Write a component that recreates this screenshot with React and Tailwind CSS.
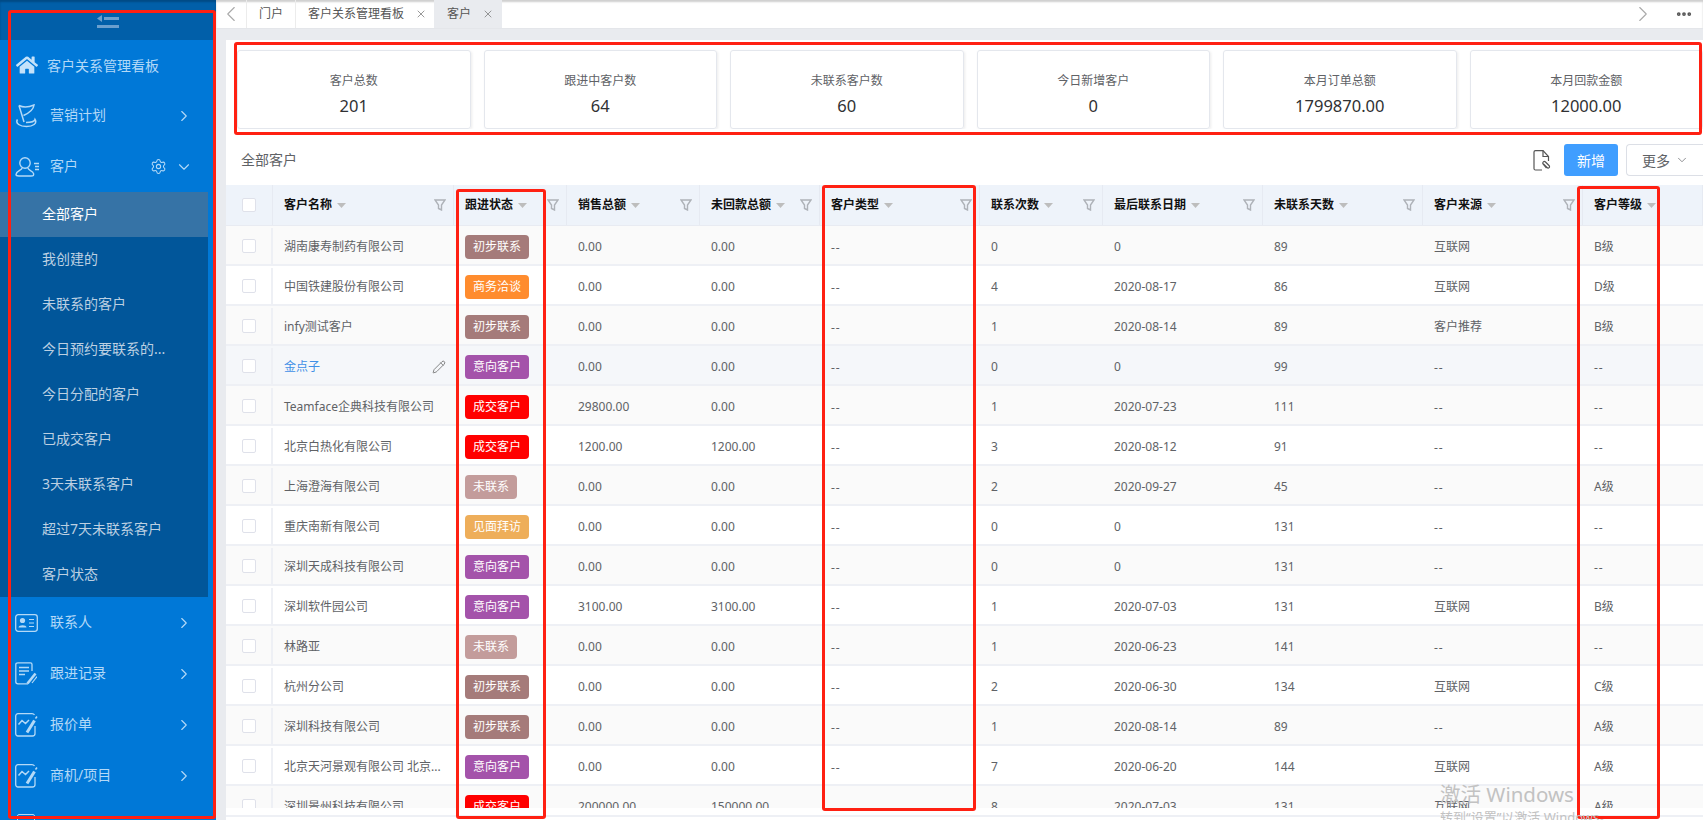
import { ChevronDown, ChevronLeft, ChevronRight, Ellipsis, Pencil, Settings, X } from "lucide-react";
import { FaHome } from "react-icons/fa";

const stats = [
  ["客户总数", "201"],
  ["跟进中客户数", "64"],
  ["未联系客户数", "60"],
  ["今日新增客户", "0"],
  ["本月订单总额", "1799870.00"],
  ["本月回款金额", "12000.00"],
];

const columns = ["客户名称", "跟进状态", "销售总额", "未回款总额", "客户类型", "联系次数", "最后联系日期", "未联系天数", "客户来源", "客户等级"];

const statusColors = {
  初步联系: "bg-[#a57b7a]",
  商务洽谈: "bg-[#ff8c2e]",
  意向客户: "bg-[#a453aa]",
  成交客户: "bg-[#ff0000]",
  未联系: "bg-[#c39c9b]",
  见面拜访: "bg-[#eeae5a]",
};

const rows = [
  ["湖南康寿制药有限公司", "初步联系", "0.00", "0.00", "0", "0", "89", "互联网", "B级"],
  ["中国铁建股份有限公司", "商务洽谈", "0.00", "0.00", "4", "2020-08-17", "86", "互联网", "D级"],
  ["infy测试客户", "初步联系", "0.00", "0.00", "1", "2020-08-14", "89", "客户推荐", "B级"],
  ["金点子", "意向客户", "0.00", "0.00", "0", "0", "99", "--", "--"],
  ["Teamface企典科技有限公司", "成交客户", "29800.00", "0.00", "1", "2020-07-23", "111", "--", "--"],
  ["北京白热化有限公司", "成交客户", "1200.00", "1200.00", "3", "2020-08-12", "91", "--", "--"],
  ["上海澄海有限公司", "未联系", "0.00", "0.00", "2", "2020-09-27", "45", "--", "A级"],
  ["重庆南新有限公司", "见面拜访", "0.00", "0.00", "0", "0", "131", "--", "--"],
  ["深圳天成科技有限公司", "意向客户", "0.00", "0.00", "0", "0", "131", "--", "--"],
  ["深圳软件园公司", "意向客户", "3100.00", "3100.00", "1", "2020-07-03", "131", "互联网", "B级"],
  ["林路亚", "未联系", "0.00", "0.00", "1", "2020-06-23", "141", "--", "--"],
  ["杭州分公司", "初步联系", "0.00", "0.00", "2", "2020-06-30", "134", "互联网", "C级"],
  ["深圳科技有限公司", "初步联系", "0.00", "0.00", "1", "2020-08-14", "89", "--", "A级"],
  ["北京天河景观有限公司 北京...", "意向客户", "0.00", "0.00", "7", "2020-06-20", "144", "互联网", "A级"],
  ["深圳景州科技有限公司", "成交客户", "200000.00", "150000.00", "8", "2020-07-03", "131", "互联网", "A级"],
];

const subMenu = ["全部客户", "我创建的", "未联系的客户", "今日预约要联系的...", "今日分配的客户", "已成交客户", "3天未联系客户", "超过7天未联系客户", "客户状态"];

const gridCols = "grid grid-cols-[47px_181px_113px_133px_120px_160px_123px_160px_160px_160px_120px]";

function FlagIcon() {
  return (
    <svg width="23" height="24" viewBox="0 0 23 24" fill="none" stroke="currentColor" strokeWidth="1.5">
      <path d="M4 1.500C8 3.500 13 3.500 19 1C18.500 6 14 9 8.500 11.500" />
      <path d="M4 1.500L9 18" />
      <path d="M2.500 15.500C0 19.500 5 22.500 11.500 22.500C18 22.500 22.500 19.500 20 15.500C19.500 17.500 15 18.500 11 18.500" />
    </svg>
  );
}

function PersonIcon() {
  return (
    <svg width="24" height="20" viewBox="0 0 24 20" fill="none" stroke="currentColor" strokeWidth="1.4">
      <circle cx="10" cy="6" r="5.200" />
      <path d="M7 11C7 13.500 1.500 13.500 1 17.500C1 19 2 19 4 19H16C18.500 19 19 18.500 18.500 16.500C18 13.500 13 13.500 13 11" />
      <path d="M19 6.500H24M20 9.500H24M20 12.500H24" />
    </svg>
  );
}

function CardIcon() {
  return (
    <svg width="23" height="18" viewBox="0 0 23 18" fill="none" stroke="currentColor" strokeWidth="1.300">
      <rect x="0.700" y="0.700" width="21.600" height="16.600" rx="2.500" />
      <circle cx="7.500" cy="6.500" r="2.600" fill="currentColor" stroke="none" />
      <path d="M3.500 13.500C3.500 10.500 11.500 10.500 11.500 13.500Z" fill="currentColor" stroke="none" />
      <path d="M14 5.500H19M14 9H19M14 12.500H19" strokeWidth="1" />
    </svg>
  );
}

function DocPenIcon() {
  return (
    <svg width="22" height="23" viewBox="0 0 22 23" fill="none" stroke="currentColor" strokeWidth="1.300">
      <path d="M13 21.800H3C1.800 21.800 0.800 21 0.800 19.800V2.500C0.800 1.500 1.800 0.800 3 0.800H15.500C16.500 0.800 17 1.500 17 2.500V9" />
      <path d="M4 5.500H14M4 9H14M4 12.500H10" strokeWidth="1.400" />
      <path d="M12.500 21.500L20.500 11.500" strokeWidth="2.600" />
      <path d="M17 21L22 14.500" strokeWidth="1.200" />
    </svg>
  );
}

function ChartPenIcon() {
  return (
    <svg width="23" height="24" viewBox="0 0 23 24" fill="none" stroke="currentColor" strokeWidth="1.300">
      <path d="M20 13V20.500C20 22 19 23 17.500 23H3C1.700 23 0.700 22 0.700 20.500V3C0.700 1.700 1.700 0.700 3 0.700H17C18 0.700 19 1.200 19.500 2" />
      <path d="M3.500 11.500L7 7.500L10.500 10.500L14 7" strokeWidth="1.500" />
      <path d="M12 19.500L19.500 7.500" strokeWidth="3" />
      <path d="M20.500 5.500L22 3.500" strokeWidth="1.500" />
    </svg>
  );
}

function MenuItem({ icon, label, open, active }) {
  return (
    <div className="flex h-[51px] shrink-0 items-center pl-[15px] text-[14px] text-[#b3d9f7]">
      <span className="flex w-[35px] shrink-0 items-center">{icon}</span>
      <span className="flex-1 pb-[2px]">{label}</span>
      {active ? <Settings size={17} strokeWidth={1.500} className="mr-[8px]" /> : null}
      {open ? (
        <ChevronDown size={18} strokeWidth={1.500} className="mr-[23px]" />
      ) : active === false ? (
        <ChevronRight size={18} strokeWidth={1.500} className="mr-[23px]" />
      ) : null}
    </div>
  );
}

function Sidebar() {
  return (
    <aside className="flex h-full w-[216px] shrink-0 flex-col overflow-hidden bg-[#0078d7]">
      <div className="flex h-[40px] shrink-0 items-center justify-center bg-[#015fa9] shadow-[inset_0_2px_2px_#014a85]">
        <svg width="22" height="14" viewBox="0 0 22 14" className="mt-[3px] text-[#6b9fce]" fill="currentColor">
          <path d="M0 3.500L5 0V7Z" />
          <rect x="7" y="2" width="15" height="3" />
          <rect x="0" y="10" width="22" height="3" />
        </svg>
      </div>
      <div className="flex h-[50px] shrink-0 items-center pl-[16px] text-[14px] text-[#b3d9f7]">
        <FaHome size={22} className="mr-[9px] text-[#c4e2fa]" />
        客户关系管理看板
      </div>
      <MenuItem icon={<FlagIcon />} label="营销计划" active={false} />
      <MenuItem icon={<PersonIcon />} label="客户" active open />
      <div className="w-[208px] shrink-0 bg-[#01569a] text-[14px] text-[#bcd0e2]">
        {subMenu.map((item, i) => (
          <div key={item} className={`flex h-[45px] items-center pb-[2px] pl-[42px] ${i === 0 ? "bg-[#3673a6] text-white" : ""}`}>
            {item}
          </div>
        ))}
      </div>
      <MenuItem icon={<CardIcon />} label="联系人" active={false} />
      <MenuItem icon={<DocPenIcon />} label="跟进记录" active={false} />
      <MenuItem icon={<ChartPenIcon />} label="报价单" active={false} />
      <MenuItem icon={<ChartPenIcon />} label="商机/项目" active={false} />
      <div className="ml-[17px] mt-[13px] h-[20px] w-[18px] shrink-0 rounded-[2px] border border-[#b3d9f7]" />
    </aside>
  );
}

function TabBar() {
  return (
    <div className="flex h-[29px] shrink-0 items-stretch border-b border-[#e4e6ea] bg-white text-[12px] text-[#555] shadow-[inset_0_2px_2px_#cfcfcf]">
      <div className="flex w-[31px] items-center justify-center border-r border-[#ececec] text-[#aaa]">
        <ChevronLeft size={26} strokeWidth={1} />
      </div>
      <div className="flex w-[49px] items-center border-r border-[#ececec] pl-[12px]">门户</div>
      <div className="flex w-[138px] items-center pl-[12px]">
        客户关系管理看板
        <X size={12} strokeWidth={1.500} className="ml-[11px] text-[#777]" />
      </div>
      <div className="flex w-[68px] items-center bg-[#e9ebef] pl-[13px]">
        客户
        <X size={12} strokeWidth={1.500} className="ml-[11px] text-[#777]" />
      </div>
      <div className="flex flex-1 items-center justify-end">
        <ChevronRight size={26} strokeWidth={1} className="mr-[19px] text-[#aaa]" />
        <Ellipsis size={18} strokeWidth={3} className="mr-[10px] text-[#555]" />
      </div>
    </div>
  );
}

function Filter() {
  return (
    <svg width="12" height="12" viewBox="0 0 12 12" fill="none" stroke="#aeb2b8" strokeWidth="1.400" className="shrink-0">
      <path d="M1 1H11L7.500 6V11L4.500 9.500V6Z" />
    </svg>
  );
}

function Checkbox() {
  return <span className="h-[14px] w-[14px] rounded-[2px] border border-[#dfe1ea] bg-white" />;
}

function TableHeader() {
  return (
    <div className={`${gridCols} h-[41px] shrink-0 border-b border-[#e8ebf2] bg-[#eef3fa] text-[12px] font-bold text-[#111]`}>
      <div className="flex items-center justify-center border-r border-[#e6eaf2]">
        <Checkbox />
      </div>
      {columns.map((name, i) => (
        <div key={name} className="flex items-center border-r border-[#e6eaf2] pl-[11px] pr-[7px]">
          {name}
          <svg width="9" height="5" viewBox="0 0 9 5" className="ml-[5px]" fill="#bdbdbd">
            <path d="M0 0H9L4.500 5Z" />
          </svg>
          <span className="flex-1" />
          {i < columns.length - 1 ? <Filter /> : null}
        </div>
      ))}
    </div>
  );
}

function Value({ text }) {
  if (text === "--") return <span className="mt-[2px] tracking-[1px]">--</span>;
  return text;
}

function Row({ row, index }) {
  const [name, status, sales, unpaid, times, last, days, source, level] = row;
  const hover = index === 3;
  const bg = hover ? "bg-[#f5f7fa]" : index % 2 === 0 ? "bg-[#fafafa]" : "bg-white";
  const cell = "flex items-center pl-[11px] pt-[3px]";
  return (
    <div className={`${gridCols} h-[40px] shrink-0 border-b-2 border-[#eef0f5] text-[12px] text-[#606266] ${bg}`}>
      <div className="mt-[2px] flex items-center justify-center border-r-2 border-[#eef0f5]">
        <Checkbox />
      </div>
      <div className={`${cell} justify-between pr-[8px]`}>
        <span className={hover ? "text-[#3f8fe6]" : ""}>{name}</span>
        {hover ? <Pencil size={14} strokeWidth={1.200} className="text-[#555]" /> : null}
      </div>
      <div className={cell}>
        <span className={`flex h-[24px] items-center rounded-[4px] px-[8px] text-white ${statusColors[status]}`}>{status}</span>
      </div>
      <div className={cell}>{sales}</div>
      <div className={cell}>{unpaid}</div>
      <div className={cell}>
        <Value text="--" />
      </div>
      <div className={cell}>{times}</div>
      <div className={cell}>{last}</div>
      <div className={cell}>{days}</div>
      <div className={cell}>
        <Value text={source} />
      </div>
      <div className={cell}>
        <Value text={level} />
      </div>
    </div>
  );
}

function Highlight({ className }) {
  return <div className={`pointer-events-none absolute rounded-[3px] border-[3px] border-[#ff2012] ${className}`} />;
}

export default function App() {
  return (
    <div className="relative flex h-[820px] w-[1703px] overflow-hidden bg-[#e9ebef] font-['Noto_Sans','Noto_Sans_CJK_SC',sans-serif]">
      <Sidebar />
      <main className="flex min-w-0 flex-1 flex-col">
        <TabBar />
        <section className="ml-[10px] mt-[11px] flex min-h-0 flex-1 flex-col bg-white">
          <div className="flex shrink-0 gap-[13px] overflow-hidden pl-[11px] pt-[10px]">
            {stats.map(([label, value]) => (
              <div
                key={label}
                className="flex h-[79px] w-[233.5px] shrink-0 flex-col items-center justify-center rounded-[3px] border border-[#e4e7ed] pt-[9px] shadow-[1px_1px_3px_rgba(0,0,0,0.08)]"
              >
                <span className="text-[12px] leading-[17px] text-[#606266]">{label}</span>
                <span className="mt-[6px] text-[16.5px] leading-[22px] text-[#303133]">{value}</span>
              </div>
            ))}
          </div>
          <div className="flex h-[56px] shrink-0 items-center pl-[15px] pt-[6px]">
            <span className="flex-1 pb-[2px] text-[14px] text-[#606266]">全部客户</span>
            <svg width="18" height="21" viewBox="0 0 18 21" fill="none" stroke="#555" strokeWidth="1.200" className="mr-[13px]">
              <path d="M9 20H2.500C1.500 20 1 19.500 1 18.500V2C1 1 1.500 0.600 2.500 0.600H10L15.500 6.500V11" />
              <path d="M10 0.600V6.500H15.500" />
              <path d="M10.500 14L14 17.500C15.500 19 17.500 17 16 15.500L12.500 12C11 10.500 9 12.500 10 14L13.500 18" />
            </svg>
            <button className="h-[32px] w-[54px] rounded-[3px] bg-[#409eff] text-[14px] text-white">新增</button>
            <button className="ml-[8px] flex h-[32px] w-[77px] items-center rounded-l-[4px] border border-r-0 border-[#dcdfe6] pl-[15px] text-[14px] text-[#606266]">
              更多
              <ChevronDown size={14} strokeWidth={1.200} className="ml-[5px]" />
            </button>
          </div>
          <div className="flex h-[623px] shrink-0 flex-col overflow-hidden">
            <TableHeader />
            {rows.map((row, i) => (
              <Row key={row[0]} row={row} index={i} />
            ))}
          </div>
          <div className="mt-[7px] h-[2px] shrink-0 bg-[#eef0f5]" />
        </section>
      </main>
      <Highlight className="left-[8px] top-[10px] h-[809px] w-[208px]" />
      <Highlight className="left-[234px] top-[42px] h-[93px] w-[1468px]" />
      <Highlight className="left-[456px] top-[189px] h-[630px] w-[90px]" />
      <Highlight className="left-[822px] top-[185px] h-[626px] w-[154px]" />
      <Highlight className="left-[1577px] top-[186px] h-[633px] w-[83px]" />
      <div className="pointer-events-none absolute left-[1440px] top-[780px] text-[#c2c2c2]">
        <div className="text-[20.5px] leading-[28px]">激活 Windows</div>
        <div className="text-[13px] leading-[18px]">转到“设置”以激活 Windows。</div>
      </div>
    </div>
  );
}
